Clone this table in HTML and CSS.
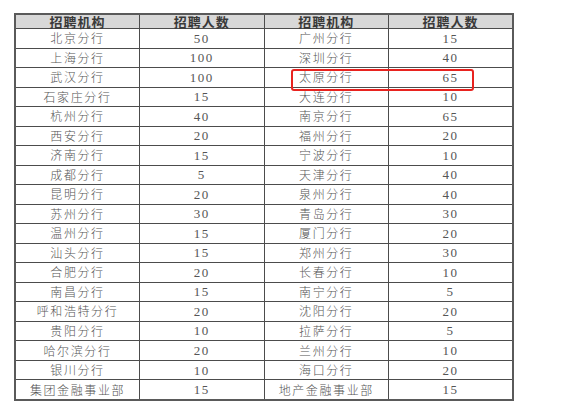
FILE: index.html
```html
<!DOCTYPE html>
<html lang="zh">
<head>
<meta charset="utf-8">
<link rel="stylesheet" href="styles.css">
</head>
<body>
<div class="wrap">
<table class="grid">
<thead>
<tr><th>招聘机构</th><th>招聘人数</th><th>招聘机构</th><th>招聘人数</th></tr>
</thead>
<tbody>
<tr><td>北京分行</td><td class="n">50</td><td>广州分行</td><td class="n">15</td></tr>
<tr><td>上海分行</td><td class="n">100</td><td>深圳分行</td><td class="n">40</td></tr>
<tr><td>武汉分行</td><td class="n">100</td><td>太原分行</td><td class="n">65</td></tr>
<tr><td>石家庄分行</td><td class="n">15</td><td>大连分行</td><td class="n">10</td></tr>
<tr><td>杭州分行</td><td class="n">40</td><td>南京分行</td><td class="n">65</td></tr>
<tr><td>西安分行</td><td class="n">20</td><td>福州分行</td><td class="n">20</td></tr>
<tr><td>济南分行</td><td class="n">15</td><td>宁波分行</td><td class="n">10</td></tr>
<tr><td>成都分行</td><td class="n">5</td><td>天津分行</td><td class="n">40</td></tr>
<tr><td>昆明分行</td><td class="n">20</td><td>泉州分行</td><td class="n">40</td></tr>
<tr><td>苏州分行</td><td class="n">30</td><td>青岛分行</td><td class="n">30</td></tr>
<tr><td>温州分行</td><td class="n">15</td><td>厦门分行</td><td class="n">20</td></tr>
<tr><td>汕头分行</td><td class="n">15</td><td>郑州分行</td><td class="n">30</td></tr>
<tr><td>合肥分行</td><td class="n">20</td><td>长春分行</td><td class="n">10</td></tr>
<tr><td>南昌分行</td><td class="n">15</td><td>南宁分行</td><td class="n">5</td></tr>
<tr><td>呼和浩特分行</td><td class="n">20</td><td>沈阳分行</td><td class="n">20</td></tr>
<tr><td>贵阳分行</td><td class="n">10</td><td>拉萨分行</td><td class="n">5</td></tr>
<tr><td>哈尔滨分行</td><td class="n">20</td><td>兰州分行</td><td class="n">10</td></tr>
<tr><td>银川分行</td><td class="n">10</td><td>海口分行</td><td class="n">20</td></tr>
<tr><td>集团金融事业部</td><td class="n">15</td><td>地产金融事业部</td><td class="n">15</td></tr>
</tbody>
</table>
<div class="mark"></div>
</div>
</body>
</html>
```
FILE: styles.css
```css
html, body {
  margin: 0;
  padding: 0;
  background: #ffffff;
}
.wrap {
  position: relative;
  padding: 13px 0 0 14px;
}
.grid {
  border-collapse: collapse;
  width: 500px;
  height: 388px;
  table-layout: fixed;
  border: 2px solid #5a5a5a;
  font-family: "Noto Sans CJK SC", "Liberation Serif", serif;
}
.grid th,
.grid td {
  border: 1px solid #4c4c4c;
  padding: 0;
  text-align: center;
  vertical-align: middle;
  line-height: 1;
  white-space: nowrap;
}
.grid th {
  background: #d8d8d8;
  font-size: 13px;
  font-weight: 700;
  color: #3a3a3a;
  letter-spacing: 1px;
}
.grid td {
  font-size: 12px;
  font-weight: 300;
  color: #555555;
  letter-spacing: 1.6px;
}
.grid td.n {
  font-family: "Liberation Serif", serif;
  font-size: 13px;
  font-weight: 400;
  letter-spacing: 1.5px;
}
.mark {
  position: absolute;
  left: 291px;
  top: 69px;
  width: 179px;
  height: 18px;
  border: 2px solid #e8231f;
  border-radius: 3px;
}
```
